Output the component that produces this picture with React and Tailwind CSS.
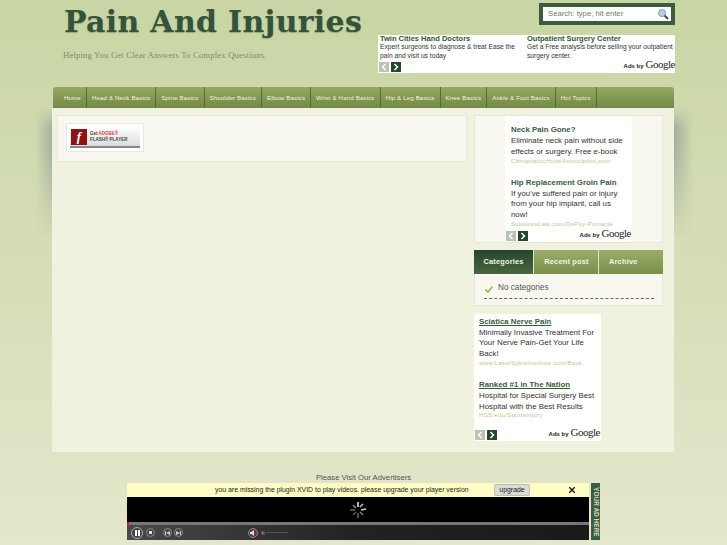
const nav = [
  "Home", "Head & Neck Basics", "Spine Basics", "Shoulder Basics", "Elbow Basics",
  "Wrist & Hand Basics", "Hip & Leg Basics", "Knee Basics", "Ankle & Foot Basics", "Hot Topics",
];

function Pager() {
  return (
    <div className="flex gap-[2px]">
      <span className="w-[10px] h-[10px] bg-[#b9c4b4] flex items-center justify-center">
        <svg width="6" height="8" viewBox="0 0 6 8"><path d="M4.5 1 1.5 4l3 3" fill="none" stroke="#fff" strokeWidth="1.5" /></svg>
      </span>
      <span className="w-[10px] h-[10px] bg-[#27452f] flex items-center justify-center">
        <svg width="6" height="8" viewBox="0 0 6 8"><path d="M1.5 1 4.5 4l-3 3" fill="none" stroke="#fff" strokeWidth="1.5" /></svg>
      </span>
    </div>
  );
}

function AdsBy() {
  return (
    <span className="flex items-baseline gap-[2px] text-[#222] leading-[12px]">
      <span className="text-[6px] font-bold">Ads by</span>
      <span className="text-[11px] font-['Liberation_Serif'] tracking-[-0.5px]">Google</span>
    </span>
  );
}

function TallAd({ title, body, url, underline }) {
  return (
    <div>
      <div className={"text-[7.85px] font-bold text-[#3d5a41] leading-[12px] " + (underline ? "underline" : "")}>{title}</div>
      <div className="text-[7.85px] text-[#333] leading-[10.8px] whitespace-pre-line">{body}</div>
      <div className="text-[6.2px] text-[#bcc795] leading-[9px] tracking-[0.2px] -mt-[2px]">{url}</div>
    </div>
  );
}

function Round({ className = "", children }) {
  return (
    <span className={"w-[9px] h-[9px] rounded-full bg-[#444] border border-[#888] flex items-center justify-center " + className}>{children}</span>
  );
}

const sideMask = "[mask-image:linear-gradient(to_bottom,transparent,black_15%,black_30%,transparent)]";

export default function App() {
  return (
    <div className="w-[727px] h-[545px] overflow-hidden bg-gradient-to-b from-[#c9d5a4] via-[#d6deb8] to-[#e3e7cc] font-['Liberation_Sans',sans-serif] relative">
      <header className="h-[87px] pl-[53px] pr-[52px] flex justify-between">
        <div className="pt-[2px]">
          <h1 className="font-['DejaVu_Serif',serif] font-bold text-[30px] leading-[40px] text-[#33533a] ml-[11px] tracking-[0.3px] whitespace-nowrap [text-shadow:0_1px_1px_rgba(120,140,100,0.6)]">Pain And Injuries</h1>
          <p className="font-['Liberation_Serif',serif] text-[8.7px] leading-[12px] text-[#7f8b6c] ml-[10px] mt-[7px] tracking-[0.15px] whitespace-nowrap">Helping You Get Clear Answers To Complex Questions.</p>
        </div>
        <div className="w-[297px] flex flex-col items-end">
          <div className="mt-[3px] w-[136px] h-[22px] border-[4px] border-[#3c5b40] bg-white flex items-center justify-between pl-[5px] pr-[2px]">
            <span className="text-[7.7px] text-[#6b7f62]">Search: type, hit enter</span>
            <svg width="12" height="12" viewBox="0 0 12 12">
              <circle cx="5" cy="5" r="3.6" fill="#b5cbe0" stroke="#8aa3b8" />
              <path d="M7.5 7.5 11 11" stroke="#444" strokeWidth="2" />
            </svg>
          </div>
          <div className="mt-[10px] w-[297px] h-[38px] bg-white relative px-[2px]">
            <div className="flex">
              <div className="w-[148px]">
                <div className="text-[7.5px] font-bold text-[#33533a] leading-[8px]">Twin Cities Hand Doctors</div>
                <div className="text-[6.7px] text-[#333] leading-[8.5px]">Expert surgeons to diagnose &amp; treat Ease the<br />pain and visit us today</div>
              </div>
              <div className="w-[147px]">
                <div className="text-[7.5px] font-bold text-[#33533a] leading-[8px]">Outpatient Surgery Center</div>
                <div className="text-[6.7px] text-[#333] leading-[8.5px]">Get a Free analysis before selling your outpatient<br />surgery center.</div>
              </div>
            </div>
            <div className="absolute left-[1px] right-0 bottom-[1px] flex justify-between items-end">
              <Pager />
              <AdsBy />
            </div>
          </div>
        </div>
      </header>

      <div className="w-[622px] ml-[52px] relative">
        <div className={"absolute -left-[16px] top-[21px] w-[16px] h-[130px] bg-gradient-to-l from-[#a6af9f] to-transparent " + sideMask} />
        <div className={"absolute -right-[19px] top-[21px] w-[19px] h-[130px] bg-gradient-to-r from-[#a6af9f] to-transparent " + sideMask} />
        <nav className="relative h-[21px] ml-[1px] rounded-t-[3px] bg-gradient-to-b from-[#96a964] to-[#728845] flex pl-[6px] text-[6.1px] text-[#f2f4e4]">
          {nav.map((label) => (
            <span key={label} className="px-[5px] flex items-center border-r border-[#566b38] whitespace-nowrap tracking-[0.16px]">{label}</span>
          ))}
        </nav>
        <main className="relative h-[344px] bg-[#f0f2df] flex pl-[5px] pr-[11px] pt-[7px] justify-between">
          <section className="w-[410px] h-[47px] bg-[#f8f8f0] border border-[#e7e9d6] pl-[8px] pt-[7px]">
            <div className="w-[78px] h-[29px] bg-white border border-[#e7e7e7] p-[3px]">
              <div className="h-[21px] bg-gradient-to-b from-[#ffffff] to-[#dcdcdc] border-b-2 border-[#888] flex items-center gap-[3px] relative">
                <span className="w-[16px] h-[16px] ml-[1px] bg-[#8e1414] text-white italic font-bold font-['Liberation_Serif'] text-[13px] leading-[16px] text-center">f</span>
                <span className="text-[4.5px] leading-[6px] font-bold text-[#444]">Get <span className="text-[#dd4444]">ADOBE®</span><br />FLASH® PLAYER</span>
              </div>
            </div>
          </section>
          <aside className="w-[189px]">
            <div className="h-[128px] bg-[#f8f8f0] border border-[#e7e9d6]">
              <div className="w-[127px] h-[126px] ml-[30px] bg-white pl-[6px] pr-[1px] pt-[8px] relative">
                <TallAd title="Neck Pain Gone?" body={"Eliminate neck pain without side\neffects or surgery. Free e-book"} url="ChiropracticHopeAssociation.com" />
                <div className="h-[12px]" />
                <TallAd title="Hip Replacement Groin Pain" body={"If you've suffered pain or injury\nfrom your hip implant, call us\nnow!"} url="SokoloveLaw.com/DePuy-Pinnacle" />
                <div className="absolute left-[1px] right-[1px] bottom-[1px] flex justify-between items-end">
                  <Pager />
                  <AdsBy />
                </div>
              </div>
            </div>
            <div className="mt-[7px] h-[24px] flex text-[7.4px] font-bold text-[#f2f4e4] tracking-[0.2px]">
              <span className="w-[60px] bg-gradient-to-b from-[#27452f] to-[#47673f] flex items-center justify-center border-r border-[#dfe5c4]">Categories</span>
              <span className="w-[65px] pl-[1px] bg-gradient-to-b from-[#9aad68] to-[#7a8f4d] flex items-center justify-center border-r border-[#dfe5c4]">Recent post</span>
              <span className="flex-1 pl-[10px] bg-gradient-to-b from-[#9aad68] to-[#7a8f4d] flex items-center">Archive</span>
            </div>
            <div className="h-[32px] bg-[#f8f8f0] border border-[#e7e9d6] border-t-0 pl-[9px] pr-[8px] pt-[9px]">
              <div className="border-b border-dashed border-[#666] h-[16px] flex gap-[5px] text-[8.2px] text-[#555] leading-[10px]">
                <svg width="8" height="10" viewBox="0 0 8 10" className="mt-[1px] ml-[1px]"><path d="M.5 5.5 3 8 7.5 2.5" fill="none" stroke="#9ab54a" strokeWidth="1.6" /></svg>
                No categories
              </div>
            </div>
            <div className="mt-[8px] w-[127px] h-[127px] bg-white pl-[5px] pr-[1px] pt-[1.5px] relative">
              <TallAd underline title="Sciatica Nerve Pain" body={"Minimally Invasive Treatment For\nYour Nerve Pain-Get Your Life\nBack!"} url="www.LaserSpineInstitute.com/Back" />
              <div className="h-[12px]" />
              <TallAd underline title="Ranked #1 in The Nation" body={"Hospital for Special Surgery Best\nHospital with the Best Results"} url="HSS.edu/SportsInjury" />
              <div className="absolute left-[1px] right-[1px] bottom-[1px] flex justify-between items-end">
                <Pager />
                <AdsBy />
              </div>
            </div>
          </aside>
        </main>
      </div>

      <footer className="mt-[20px]">
        <div className="text-[7.7px] text-[#555] text-center leading-[11px]">Please Visit Our Advertisers</div>
        <div className="ml-[127px] flex gap-[2px] h-[57px]">
          <div className="w-[462px]">
            <div className="h-[14px] bg-[#fdfcc4] flex items-center relative text-[6.9px] text-[#222] pl-[88px]">
              <span>you are missing the plugin XVID to play videos. please upgrade your player version</span>
              <span className="absolute left-[367px] top-[1px] w-[36px] h-[12px] bg-[#dcdcd0] border border-[#bbb] rounded-[2px] text-center leading-[10px]">upgrade</span>
              <svg className="absolute left-[442px] top-[4px]" width="6" height="6" viewBox="0 0 6 6"><path d="M0 0 6 6M6 0 0 6" stroke="#222" strokeWidth="1.5" /></svg>
            </div>
            <div className="h-[25px] bg-black flex items-center justify-center">
              <svg width="18" height="18" viewBox="0 0 18 18">
                <g stroke="#ddd" strokeWidth="1.6">
                  <path d="M9 1v5" /><path d="M14 3 11 6" stroke="#bbb" /><path d="M17 8 12 9" stroke="#ccc" /><path d="M14 14l-3-3" stroke="#777" />
                  <path d="M9 17v-5" stroke="#666" /><path d="M4 14l3-3" stroke="#555" /><path d="M1 9h5" stroke="#666" /><path d="M4 4l3 3" stroke="#888" />
                </g>
              </svg>
            </div>
            <div className="h-[3px] bg-[#777] relative"><span className="absolute left-0 top-0 w-[2px] h-[3px] bg-[#e01010]" /></div>
            <div className="h-[15px] bg-gradient-to-r from-[#4a4a4a] via-[#222] to-[#1a1a1a] flex items-center pl-[4px] gap-[3px]">
              <span className="w-[12px] h-[12px] rounded-full bg-[#444] border border-[#aaa] flex items-center justify-center gap-[1px]">
                <i className="w-[2px] h-[6px] bg-white" /><i className="w-[2px] h-[6px] bg-white" />
              </span>
              <Round><i className="w-[3px] h-[3px] bg-[#ddd]" /></Round>
              <Round className="ml-[5px]">
                <svg width="5" height="4" viewBox="0 0 5 4"><path d="M0 0h1v4H0zM5 0v4L1 2z" fill="#ccc" /></svg>
              </Round>
              <Round className="-ml-[1px]">
                <svg width="5" height="4" viewBox="0 0 5 4"><path d="M4 0h1v4H4zM0 0v4l4-2z" fill="#ccc" /></svg>
              </Round>
              <Round className="ml-[62px] w-[10px] h-[10px]">
                <svg width="7" height="6" viewBox="0 0 7 6"><path d="M0 2h1.5L4 0v6L1.500 4H0z" fill="#ddd" /><circle cx="5.500" cy="3" r="1.500" fill="#e01010" /></svg>
              </Round>
              <span className="w-[4px] h-[4px] rounded-full bg-[#666]" />
              <span className="w-[22px] h-[1px] bg-[#555] -ml-[2px]" />
            </div>
          </div>
          <div className="w-[9px] h-[57px] bg-[#3c5b40] flex items-center justify-center overflow-hidden">
            <span className="text-[6.5px] font-bold text-[#cfd8b8] whitespace-nowrap rotate-90">YOUR AD HERE</span>
          </div>
        </div>
      </footer>
    </div>
  );
}
